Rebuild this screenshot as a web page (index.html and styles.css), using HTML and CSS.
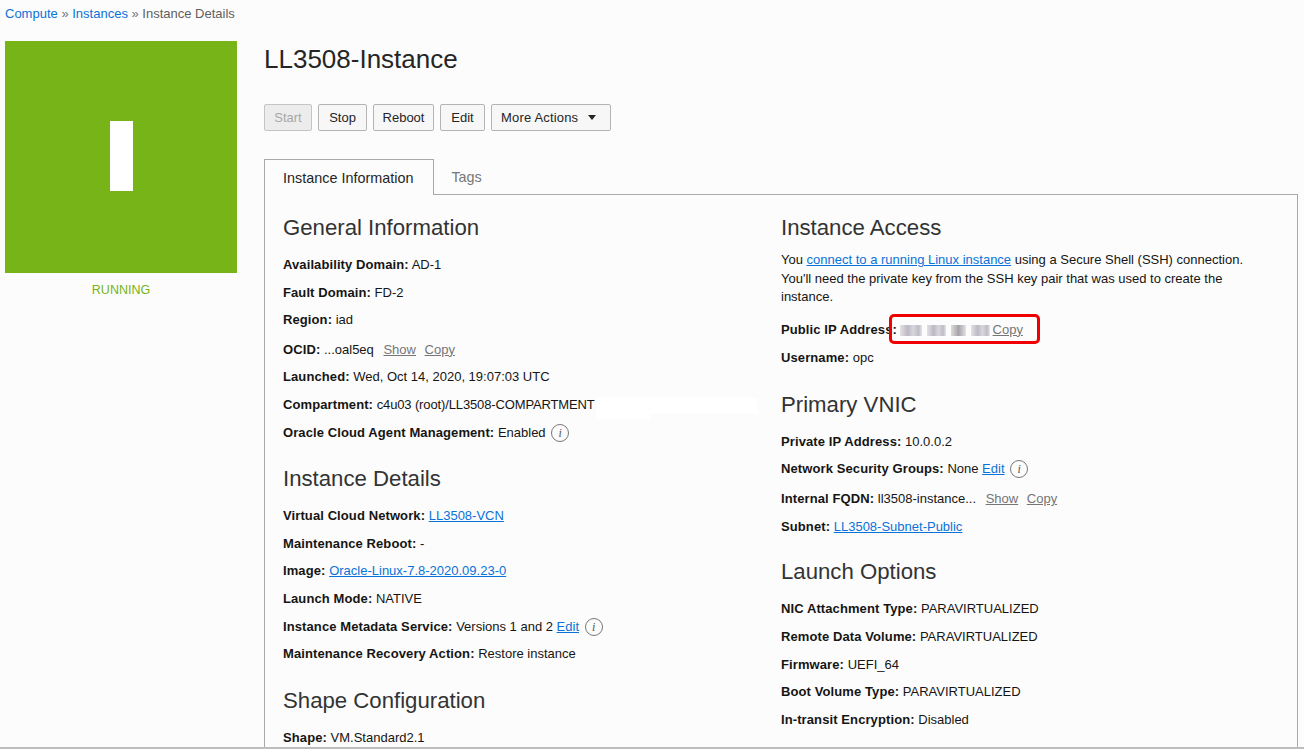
FILE: index.html
```html
<!DOCTYPE html>
<html lang="en">
<head>
    <meta charset="UTF-8">
    <meta name="viewport" content="width=device-width, initial-scale=1.0">
    <title>Instance Details</title>
    <link rel="stylesheet" href="styles.css">
</head>
<body>
    <div class="page">
        <div class="breadcrumb">
            <a href="#">Compute</a> <span class="sep">»</span> <a href="#">Instances</a> <span class="sep">»</span> Instance Details
        </div>

        <div class="layout">
            <div class="status-col">
                <div class="tile"><div class="tile-letter"></div></div>
                <div class="status-text">RUNNING</div>
            </div>

            <div class="main-col">
                <h1>LL3508-Instance</h1>
                <div class="actions">
                    <button class="btn btn-start disabled">Start</button>
                    <button class="btn btn-stop">Stop</button>
                    <button class="btn btn-reboot">Reboot</button>
                    <button class="btn btn-edit">Edit</button>
                    <button class="btn btn-more">More Actions <span class="caret"></span></button>
                </div>

                <div class="tabs">
                    <div class="tab active">Instance Information</div>
                    <div class="tab">Tags</div>
                </div>

                <div class="panel">
                    <div class="col">
                        <h2>General Information</h2>
                        <div class="row"><b>Availability Domain:</b> AD-1</div>
                        <div class="row"><b>Fault Domain:</b> FD-2</div>
                        <div class="row"><b>Region:</b> iad</div>
                        <div class="row row-tall"><b>OCID:</b> ...oal5eq <a class="muted first" href="#">Show</a> <a class="muted" href="#">Copy</a></div>
                        <div class="row"><b>Launched:</b> Wed, Oct 14, 2020, 19:07:03 UTC</div>
                        <div class="row"><b>Compartment:</b> <span class="path">c4u03 (root)/LL3508-COMPARTMENT</span><span class="mask mask-a"></span><span class="mask mask-b"></span></div>
                        <div class="row"><b>Oracle Cloud Agent Management:</b> Enabled <span class="info">i</span></div>

                        <h2 class="next">Instance Details</h2>
                        <div class="row"><b>Virtual Cloud Network:</b> <a href="#">LL3508-VCN</a></div>
                        <div class="row"><b>Maintenance Reboot:</b> -</div>
                        <div class="row"><b>Image:</b> <a href="#">Oracle-Linux-7.8-2020.09.23-0</a></div>
                        <div class="row"><b>Launch Mode:</b> NATIVE</div>
                        <div class="row"><b>Instance Metadata Service:</b> Versions 1 and 2 <a href="#">Edit</a> <span class="info">i</span></div>
                        <div class="row"><b>Maintenance Recovery Action:</b> Restore instance</div>

                        <h2 class="next">Shape Configuration</h2>
                        <div class="row"><b>Shape:</b> VM.Standard2.1</div>
                    </div>

                    <div class="col">
                        <h2>Instance Access</h2>
                        <p class="intro">You <a href="#">connect to a running Linux instance</a> using a Secure Shell (SSH) connection. You'll need the private key from the SSH key pair that was used to create the instance.</p>
                        <div class="row ip-row"><b>Public IP Address:</b> <span class="ip"><i></i><i></i><i></i><i></i></span><a class="muted ip-copy" href="#">Copy</a><span class="callout"></span></div>
                        <div class="row"><b>Username:</b> opc</div>

                        <h2 class="next">Primary VNIC</h2>
                        <div class="row"><b>Private IP Address:</b> 10.0.0.2</div>
                        <div class="row"><b>Network Security Groups:</b> None <a href="#">Edit</a> <span class="info">i</span></div>
                        <div class="row row-tall"><b>Internal FQDN:</b> ll3508-instance... <a class="muted first" href="#">Show</a> <a class="muted" href="#">Copy</a></div>
                        <div class="row"><b>Subnet:</b> <a href="#">LL3508-Subnet-Public</a></div>

                        <h2 class="next launch">Launch Options</h2>
                        <div class="row"><b>NIC Attachment Type:</b> PARAVIRTUALIZED</div>
                        <div class="row"><b>Remote Data Volume:</b> PARAVIRTUALIZED</div>
                        <div class="row"><b>Firmware:</b> UEFI_64</div>
                        <div class="row"><b>Boot Volume Type:</b> PARAVIRTUALIZED</div>
                        <div class="row"><b>In-transit Encryption:</b> Disabled</div>
                    </div>
                </div>
            </div>
        </div>
    </div>
</body>
</html>
```

FILE: styles.css
```css
html, body {
    margin: 0;
    height: 749px;
    overflow: hidden;
}
body {
    font-family: "Liberation Sans", Arial, sans-serif;
    font-size: 13px;
    line-height: 18px;
    color: #161513;
    background-color: #fcfcfc;
}
b {
    letter-spacing: 0.1px;
}
a {
    color: #0a72d8;
}
.page {
    height: 747px;
    overflow: hidden;
    border-bottom: 2px solid #bdbdbd;
}
.breadcrumb {
    padding: 5px 5px 0;
    height: 36px;
    font-size: 13px;
    color: #5f5f5f;
}
.breadcrumb a {
    text-decoration: none;
}
.breadcrumb .sep {
    color: #777;
}
.layout {
    display: flex;
}
.status-col {
    width: 232px;
    margin-left: 5px;
    margin-right: 27px;
    flex: none;
}
.tile {
    height: 232px;
    background-color: #76b418;
    display: flex;
    align-items: center;
    justify-content: center;
}
.tile-letter {
    width: 23px;
    height: 70px;
    margin-top: -3px;
    background-color: #fff;
}
.status-text {
    margin-top: 8px;
    text-align: center;
    font-size: 12.5px;
    color: #76b418;
}
.main-col {
    width: 1034px;
    flex: none;
}
h1 {
    margin: 0;
    height: 63px;
    font-size: 26px;
    line-height: 36px;
    font-weight: normal;
    color: #252525;
}
.actions {
    display: flex;
    gap: 6px;
    height: 55px;
}
.btn {
    height: 27px;
    padding: 0;
    font-family: inherit;
    font-size: 13px;
    color: #252525;
    background-color: #f7f7f7;
    border: 1px solid #b4b4b4;
    border-radius: 2px;
}
.btn-start {
    width: 48px;
}
.btn-stop {
    width: 49px;
}
.btn-reboot {
    width: 61px;
}
.btn-edit {
    width: 45px;
}
.btn-more {
    width: 120px;
    letter-spacing: 0.17px;
}
.btn.disabled {
    color: #a8a8a8;
    background-color: #ececec;
    border-color: #c4c4c4;
}
.caret {
    display: inline-block;
    margin-left: 6px;
    margin-right: 5px;
    vertical-align: 2px;
    border-left: 4.5px solid transparent;
    border-right: 4.5px solid transparent;
    border-top: 5px solid #252525;
}
.tabs {
    display: flex;
    height: 36px;
}
.tab {
    padding: 9px 19px 0 17px;
    font-size: 14.4px;
    color: #777;
}
.tab.active {
    padding: 9px 20px 0 18px;
    color: #252525;
    background-color: #fcfcfc;
    border: 1px solid #a9a9a9;
    border-bottom: none;
    position: relative;
    z-index: 1;
    height: 26px;
}
.panel {
    display: flex;
    border: 1px solid #a9a9a9;
    border-bottom: none;
    margin-top: -1px;
    padding: 19px 0 0 18px;
}
.col {
    width: 498px;
    flex: none;
}
h2 {
    margin: 0;
    height: 42px;
    font-size: 22.2px;
    line-height: 28px;
    font-weight: normal;
    color: #333;
}
h2.next {
    margin-top: 14px;
}
h2.launch {
    margin-top: 13.2px;
}
.row {
    height: 27.6px;
    white-space: nowrap;
    position: relative;
}
.row-tall {
    height: 29.6px;
    padding-top: 2px;
    box-sizing: border-box;
}
.ip-row {
    height: 28.4px;
}
.path {
    letter-spacing: -0.13px;
}
.intro {
    margin: -5px 0 14.4px;
    width: 480px;
    line-height: 18.5px;
}
.muted {
    color: #757575;
    margin-left: 5px;
}
.muted.first {
    margin-left: 6px;
}
.ip-copy {
    margin-left: 3px;
}
.mask {
    position: absolute;
    top: 2px;
    background-color: #fff;
}
.mask-a {
    left: 313px;
    width: 54px;
    height: 21px;
}
.mask-b {
    left: 367px;
    width: 108px;
    height: 16px;
}
.info {
    display: inline-block;
    width: 16px;
    height: 16px;
    margin-left: 2px;
    border: 1px solid #777;
    border-radius: 50%;
    text-align: center;
    font-family: "Liberation Serif", serif;
    font-style: italic;
    font-size: 12px;
    line-height: 16px;
    color: #555;
    vertical-align: 0;
}
.ip {
    display: inline-flex;
    gap: 5px;
    margin-left: -1px;
    vertical-align: -2px;
}
.ip i {
    display: block;
    width: 19px;
    height: 11px;
    background: linear-gradient(90deg, #e4e2e6, #bdb8c4 35%, #d8d6dc 60%, #c0bcc6 85%, #e6e6ea);
    filter: blur(0.7px);
}
.ip i:nth-child(1) {
    width: 22px;
}
.ip i:nth-child(3) {
    width: 15px;
    background: linear-gradient(90deg, #dedbdc, #a8a2a8 50%, #e2e4e6);
}
.callout {
    position: absolute;
    left: 108px;
    top: -7px;
    width: 145px;
    height: 24px;
    border: 3px solid #f00000;
    border-radius: 5px;
}
```
